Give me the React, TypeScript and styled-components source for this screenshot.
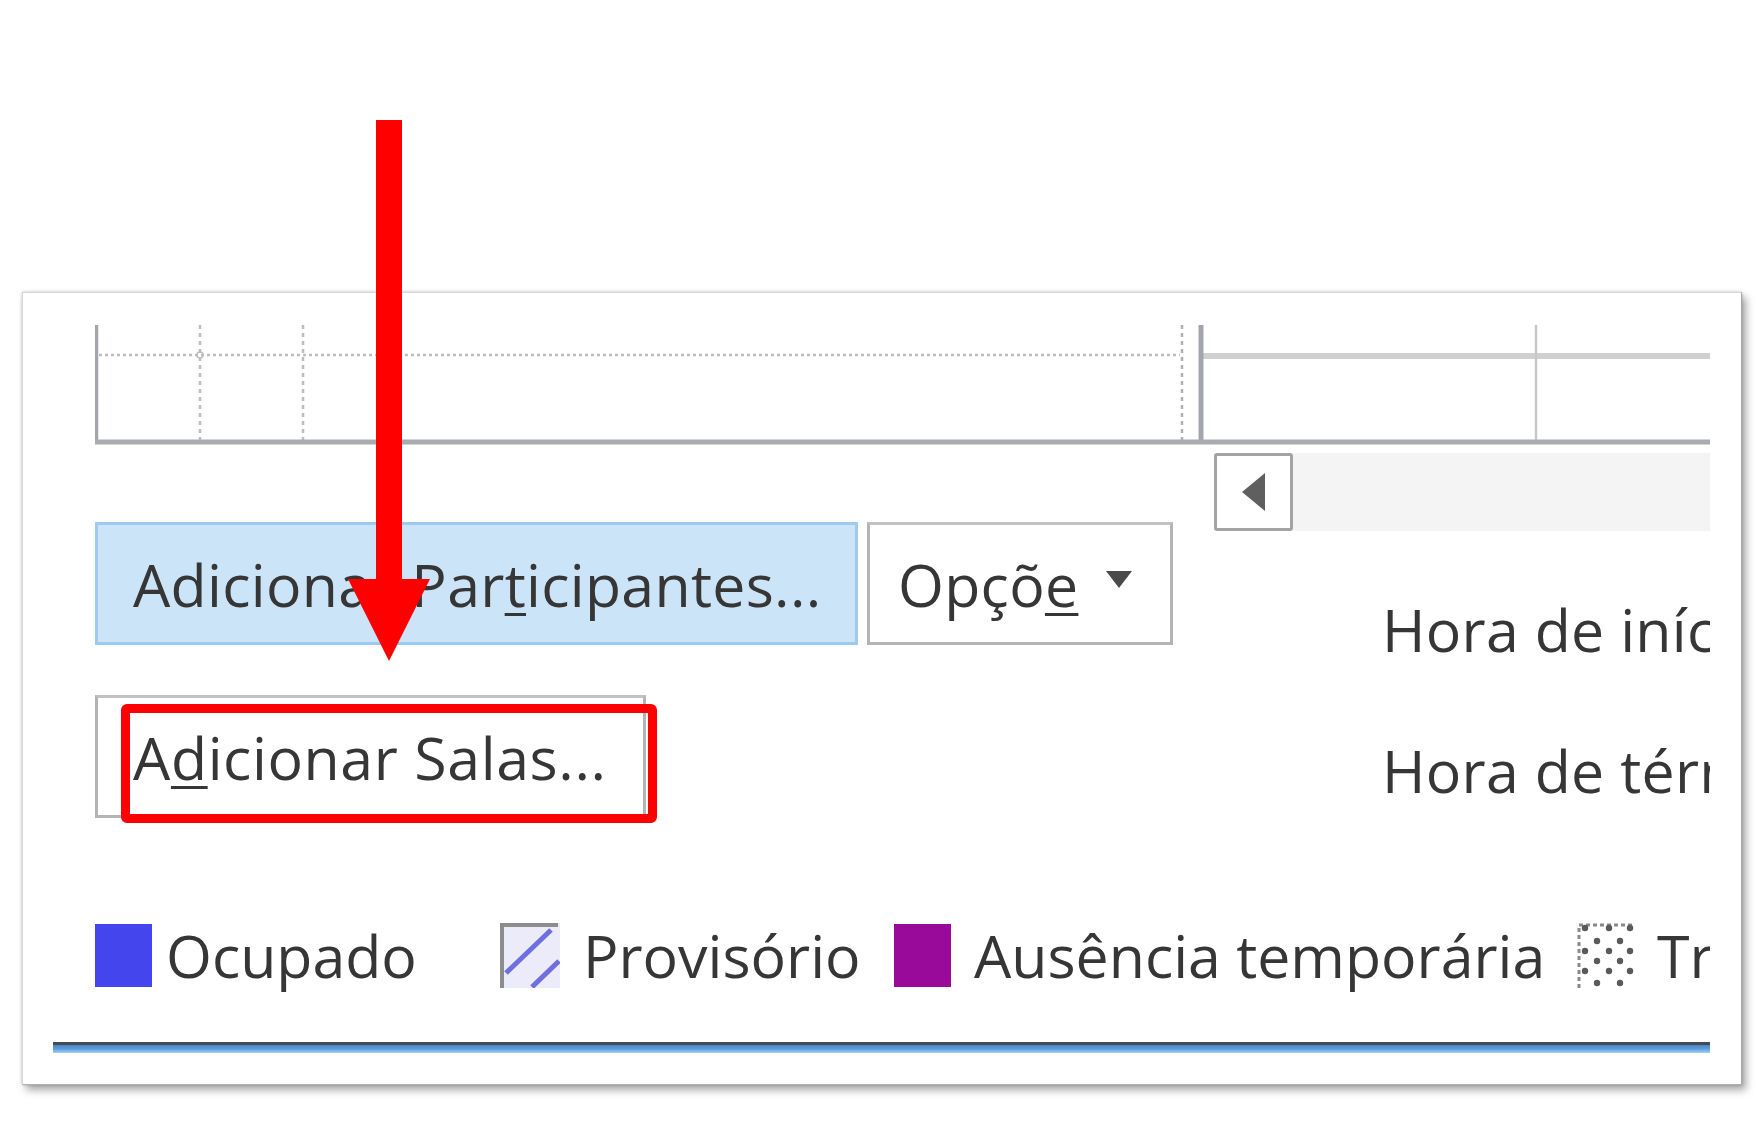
import styled, { createGlobalStyle } from 'styled-components';

const GlobalStyle = createGlobalStyle`
  html, body {
    margin: 0;
    padding: 0;
    background: #ffffff;
  }
  body {
    font-family: 'Open Sans', 'Noto Sans', 'Liberation Sans', sans-serif;
  }
`;

const Page = styled.div`
  position: relative;
  width: 1764px;
  height: 1139px;
  padding: 292px 0 0 22px;
  box-sizing: border-box;
  overflow: hidden;
`;

const Panel = styled.div`
  width: 1720px;
  height: 793px;
  box-sizing: border-box;
  background: #ffffff;
  border: 1px solid #d6d6d6;
  border-right-color: #a8a8a8;
  border-bottom-color: #b0b0b0;
  box-shadow: 0 0 3px rgba(0, 0, 0, 0.2), 4px 5px 8px rgba(0, 0, 0, 0.35);
`;

const Clip = styled.div`
  width: 1687px;
  height: 100%;
  overflow: hidden;
  padding-top: 32px;
  box-sizing: border-box;
  color: #363636;
  font-size: 59px;
`;

const Content = styled.div`
  padding-left: 72px;
`;

const Timeline = styled.svg`
  display: block;
  width: 1615px;
  height: 120px;
`;

const Lower = styled.div`
  display: flex;
  gap: 41px;
  margin-top: 8px;
`;

const LeftCol = styled.div`
  width: 1078px;
  padding-top: 69px;
  display: flex;
  flex-direction: column;
  gap: 50px;
`;

const ButtonRow = styled.div`
  display: flex;
  gap: 9px;
`;

const Button = styled.div<{ $w: number; $pad?: number; $spacing?: number; $primary?: boolean }>`
  width: ${p => p.$w}px;
  height: 123px;
  box-sizing: border-box;
  display: flex;
  align-items: center;
  padding-left: ${p => p.$pad ?? 35}px;
  background: ${p => (p.$primary ? '#cce4f7' : '#ffffff')};
  border: 3px solid ${p => (p.$primary ? '#9ccaf0' : '#b4b4b4')};
  border-top-color: ${p => (p.$primary ? '#9ccaf0' : '#c2c2c2')};
  font-size: 59px;
  line-height: 80px;
  color: #363636;
  white-space: nowrap;
  letter-spacing: ${p => p.$spacing ?? 0.3}px;
`;

const Key = styled.span`
  text-decoration: underline;
  text-decoration-thickness: 3px;
  text-underline-offset: 6px;
`;

const Caret = styled.svg`
  width: 26px;
  height: 17px;
  margin-left: 28px;
  margin-top: -8px;
`;

const RightCol = styled.div`
  flex: 1;
  display: flex;
  flex-direction: column;
`;

const ScrollRow = styled.div`
  display: flex;
  height: 78px;
`;

const ScrollButton = styled.div`
  width: 79px;
  height: 78px;
  box-sizing: border-box;
  border: 3px solid #a4a4a4;
  border-radius: 3px;
  background: #ffffff;
  display: flex;
  align-items: center;
  justify-content: center;
`;

const ScrollTrack = styled.div`
  flex: 1;
  background: #f4f4f4;
`;

const Labels = styled.div`
  margin-top: 58px;
  padding-left: 168px;
  display: flex;
  flex-direction: column;
  gap: 61px;
`;

const Label = styled.div`
  font-size: 59px;
  line-height: 80px;
  white-space: nowrap;
  letter-spacing: 0.3px;
`;

const Legend = styled.div`
  display: flex;
  align-items: center;
  margin-top: 106px;
  height: 63px;
  white-space: nowrap;
`;

const LegendItem = styled.div<{ $w: number; $gap: number }>`
  flex: none;
  width: ${p => p.$w}px;
  display: flex;
  align-items: center;
  gap: ${p => p.$gap}px;
  font-size: 59px;
  line-height: 63px;
  letter-spacing: 0;
`;

const Swatch = styled.div<{ $color: string }>`
  flex: none;
  width: 57px;
  height: 63px;
  background: ${p => p.$color};
`;

const PatternIcon = styled.svg`
  flex: none;
  width: 60px;
  height: 65px;
`;

const BottomRule = styled.div`
  margin: 55px 0 0 30px;
  height: 11px;
  background: linear-gradient(
    to bottom,
    #4a4a4a 0,
    #4a4a4a 3px,
    #3f86cf 3px,
    #5d9fe0 7px,
    #a9cff2 11px
  );
`;

const Arrow = styled.svg`
  position: absolute;
  left: 340px;
  top: 110px;
  width: 100px;
  height: 560px;
`;

const Highlight = styled.div`
  position: absolute;
  left: 121px;
  top: 704px;
  width: 536px;
  height: 119px;
  box-sizing: border-box;
  border: 9px solid #ff0000;
  border-radius: 6px;
`;

const App: React.FC = () => {
  return (
    <>
      <GlobalStyle />
      <Page>
        <Panel>
          <Clip>
            <Content>
              <Timeline viewBox="0 0 1615 120">
                {/* dotted grid (left part) */}
                <line x1="4" y1="30" x2="1085" y2="30" stroke="#bdbdbd" strokeWidth="2.5" strokeDasharray="3 3" />
                <line x1="105" y1="0" x2="105" y2="115" stroke="#bdbdbd" strokeWidth="2.5" strokeDasharray="4 4" />
                <line x1="208" y1="0" x2="208" y2="115" stroke="#bdbdbd" strokeWidth="2.5" strokeDasharray="4 4" />
                <line x1="1087" y1="0" x2="1087" y2="115" stroke="#b0b0b0" strokeWidth="2.5" strokeDasharray="4 4" />
                <circle cx="105" cy="30" r="3" fill="none" stroke="#bdbdbd" strokeWidth="1.5" />
                {/* solid grid (right part) */}
                <line x1="1106" y1="31" x2="1615" y2="31" stroke="#d0d0d0" strokeWidth="6" />
                <line x1="1441" y1="0" x2="1441" y2="117" stroke="#c8c8c8" strokeWidth="2.5" />
                <line x1="1106" y1="0" x2="1106" y2="117" stroke="#a2a6ac" strokeWidth="5" />
                {/* frame */}
                <line x1="1.5" y1="0" x2="1.5" y2="118" stroke="#a2a6ac" strokeWidth="3.5" />
                <line x1="0" y1="117" x2="1615" y2="117" stroke="#a8abb0" strokeWidth="5" />
              </Timeline>

              <Lower>
                <LeftCol>
                  <ButtonRow>
                    <Button $w={763} $primary>
                      Adicionar Par<Key>t</Key>icipantes...
                    </Button>
                    <Button $w={306} $pad={28}>
                      Opçõ<Key>e</Key>
                      <Caret viewBox="0 0 26 17">
                        <path d="M0 0 H26 L13 17 Z" fill="#4a4a4a" />
                      </Caret>
                    </Button>
                  </ButtonRow>
                  <Button $w={551} $spacing={0.6}>
                    A<Key>d</Key>icionar Salas...
                  </Button>
                </LeftCol>

                <RightCol>
                  <ScrollRow>
                    <ScrollButton>
                      <svg width="26" height="40" viewBox="0 0 26 40">
                        <path d="M24 1 V39 L1 20 Z" fill="#5f5f5f" />
                      </svg>
                    </ScrollButton>
                    <ScrollTrack />
                  </ScrollRow>
                  <Labels>
                    <Label>Hora de início:</Label>
                    <Label>Hora de término:</Label>
                  </Labels>
                </RightCol>
              </Lower>

              <Legend>
                <LegendItem $w={405} $gap={14}>
                  <Swatch $color="#4545ee" />
                  Ocupado
                </LegendItem>
                <LegendItem $w={394} $gap={23}>
                  <PatternIcon viewBox="0 0 60 65">
                    <rect x="0" y="0" width="60" height="65" fill="#ebebfa" />
                    <path d="M2 65 V2 H58" fill="none" stroke="#8c8c8c" strokeWidth="4" />
                    <line x1="6" y1="50" x2="51" y2="7" stroke="#6f6fe0" strokeWidth="5" />
                    <line x1="32" y1="64" x2="59" y2="38" stroke="#6f6fe0" strokeWidth="5" />
                  </PatternIcon>
                  Provisório
                </LegendItem>
                <LegendItem $w={683} $gap={23}>
                  <Swatch $color="#9a0a9a" />
                  Ausência temporária
                </LegendItem>
                <LegendItem $w={400} $gap={20}>
                  <PatternIcon viewBox="0 0 60 65">
                    <rect x="0" y="0" width="60" height="65" fill="#ffffff" />
                    <path d="M2 65 V2 H58" fill="none" stroke="#8a8a8a" strokeWidth="3" strokeDasharray="4 3" />
                    {[5, 28, 48].map(y =>
                      [8, 32, 53].map(x => (
                        <circle key={`a${x}-${y}`} cx={x} cy={y} r="3.2" fill="#5a5a5a" />
                      ))
                    )}
                    {[18, 38, 60].map(y =>
                      [20, 43].map(x => (
                        <circle key={`b${x}-${y}`} cx={x} cy={y} r="3.2" fill="#5a5a5a" />
                      ))
                    )}
                  </PatternIcon>
                  Trabalhando em outro lugar
                </LegendItem>
              </Legend>
            </Content>
            <BottomRule />
          </Clip>
        </Panel>

        <Arrow viewBox="340 110 100 560">
          <rect x="376" y="120" width="26" height="460" fill="#ff0000" />
          <path d="M348 579 H430 L389 661 Z" fill="#ff0000" />
        </Arrow>
        <Highlight />
      </Page>
    </>
  );
};

export default App;
